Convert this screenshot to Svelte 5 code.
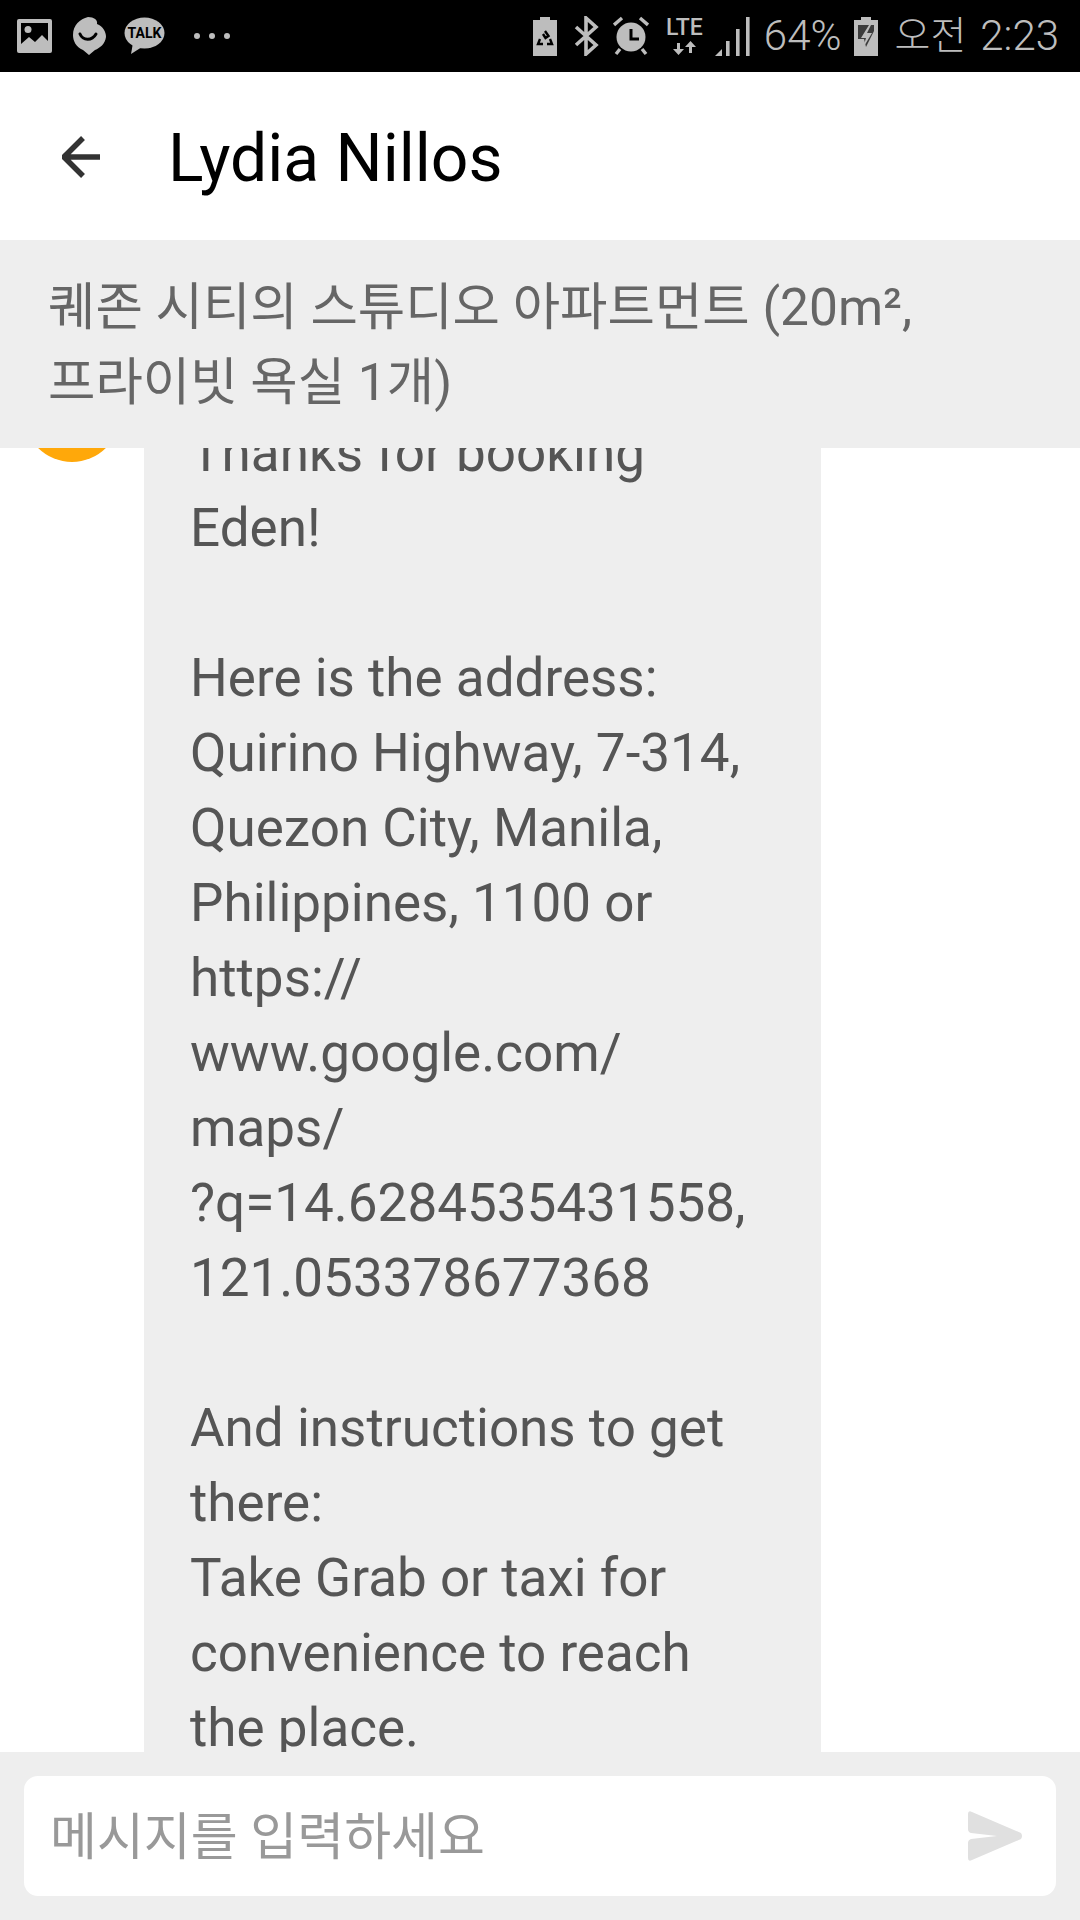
<script lang="ts">
	const messageLines = [
		'Thanks for booking',
		'Eden!',
		'',
		'Here is the address:',
		'Quirino Highway, 7-314,',
		'Quezon City, Manila,',
		'Philippines, 1100 or',
		'https://',
		'www.google.com/',
		'maps/',
		'?q=14.6284535431558,',
		'121.053378677368',
		'',
		'And instructions to get',
		'there:',
		'Take Grab or taxi for',
		'convenience to reach',
		'the place.',
		''
	];
</script>

<div class="screen">
	<div class="statusBar">
		<div class="statusLeft">
			<svg width="35" height="34" viewBox="0 0 35 34">
				<rect width="35" height="34" rx="2" fill="#bdbdbd" />
				<rect x="4" y="4" width="27" height="26" fill="#000" />
				<path d="M4 28 L4 25 L12 18 L18 23 L25 16 L31 22 L31 30 L4 30 Z" fill="#bdbdbd" />
				<circle cx="11" cy="10.5" r="3.5" fill="#bdbdbd" />
			</svg>
			<svg class="heart" width="33" height="38" viewBox="0 0 33 38">
				<path d="M16 38 L10 33 C3 30 0 24 0 18 C0 8 7 2 15 0 C21 0 25 3 24 7 C30 9 33 15 33 20 C32 27 27 31 22 33 Z" fill="#bdbdbd" />
				<path d="M7 17 C10 24 19 24 23 17" fill="none" stroke="#000" stroke-width="3" stroke-linecap="round" />
			</svg>
			<svg class="talk" width="41" height="38" viewBox="0 0 41 38">
				<ellipse cx="20.5" cy="16" rx="20" ry="15.5" fill="#bdbdbd" />
				<path d="M9 26 L7 37 L18 30 Z" fill="#bdbdbd" />
				<text x="20.5" y="21" text-anchor="middle" class="talkText">TALK</text>
			</svg>
			<div class="dots"><span></span><span></span><span></span></div>
		</div>
		<div class="statusRight">
			<svg width="24" height="39" viewBox="0 0 24 39">
				<path d="M7 0 H17 V3 H24 V39 H0 V3 H7 Z" fill="#bdbdbd" />
				<path d="M12 14 L15.5 19 L12.5 21 L10 17 M7 22 L5 27 L10 27 M14 27 L19 27 L17 22" fill="none" stroke="#000" stroke-width="2.4" />
			</svg>
			<svg class="wideGap" width="25" height="40" viewBox="0 0 25 40">
				<path d="M2 11 L22 29 L12 38 L12 2 L22 11 L2 29" fill="none" stroke="#bdbdbd" stroke-width="3.6" />
			</svg>
			<svg width="36" height="40" viewBox="0 0 36 40">
				<circle cx="18" cy="21" r="14.5" fill="#bdbdbd" />
				<path d="M18 13 V23 H26" fill="none" stroke="#000" stroke-width="3" />
				<path d="M1 9 L9 2 M35 9 L27 2 M7 33 L3 38 M29 33 L33 38" stroke="#bdbdbd" stroke-width="3.4" />
			</svg>
			<div class="lte wideGap">
				<span>LTE</span>
				<svg width="23" height="14" viewBox="0 0 23 14">
					<path d="M5.5 14 L0 8 H4 V2 H7 V8 H11 Z M17.5 0 L23 6 H19 V12 H16 V6 H12 Z" fill="#bdbdbd" />
				</svg>
			</div>
			<svg class="tightGap" width="35" height="39" viewBox="0 0 35 39">
				<path d="M0 39 L7 32 V39 Z" fill="#bdbdbd" />
				<rect x="11" y="24" width="3.6" height="15" fill="#bdbdbd" />
				<rect x="21" y="12" width="3.6" height="27" fill="#bdbdbd" />
				<rect x="31" y="0" width="3.6" height="39" fill="#bdbdbd" />
			</svg>
			<span class="statusText">64%</span>
			<svg class="tightGap" width="24" height="39" viewBox="0 0 24 39">
				<path d="M7 0 H17 V3 H24 V39 H0 V3 H7 Z" fill="#bdbdbd" />
				<path d="M4 8 H20 V14 L16 22 L12 30 L10 22 H4 Z" fill="#3c3c3c" />
				<path d="M15 8 L7 21 H12 L9 31 L18 16 H13 L17 8 Z" fill="#bdbdbd" />
			</svg>
			<span class="statusText ampm wideGap">오전</span>
			<span class="statusText">2:23</span>
		</div>
	</div>

	<header class="titleBar">
		<svg class="back" width="38" height="42" viewBox="0 0 38 42">
			<path d="M38 21 H3 M21 2 L2 21 L21 40" fill="none" stroke="#333" stroke-width="5.5" />
		</svg>
		<h1>Lydia Nillos</h1>
	</header>

	<div class="listing">퀘존 시티의 스튜디오 아파트먼트 (20m²,<br />프라이빗 욕실 1개)</div>

	<main class="chat">
		<div class="messageRow">
			<div class="avatar"></div>
			<div class="bubble">
				{#each messageLines as line}
					<div class="line">{line || '\u00a0'}</div>
				{/each}
			</div>
		</div>
	</main>

	<footer class="composer">
		<div class="inputBox">
			<span class="placeholder">메시지를 입력하세요</span>
			<svg width="56" height="50" viewBox="0 0 56 50">
				<path d="M1 3 Q1 -1 5 1 L54 22 Q56 25 54 28 L5 49 Q1 51 1 47 V32 Q1 29 4 28 L30 25 L4 22 Q1 21 1 18 Z" fill="#e0e0e0" />
			</svg>
		</div>
	</footer>
</div>

<style>
	:global(body) {
		margin: 0;
		background: #fff;
	}

	.screen {
		width: 1080px;
		height: 1920px;
		display: flex;
		flex-direction: column;
		overflow: hidden;
		font-family: Roboto, "Noto Sans CJK KR", sans-serif;
	}

	.statusBar {
		height: 72px;
		flex: none;
		background: #000;
		display: flex;
		align-items: center;
		justify-content: space-between;
		padding: 0 21px 0 17px;
		box-sizing: border-box;
	}

	.statusLeft,
	.statusRight {
		display: flex;
		align-items: center;
	}

	.statusLeft {
		gap: 20px;
	}

	.statusRight {
		gap: 14px;
	}

	.heart {
		margin-left: 1px;
	}

	.talk {
		margin-left: -2px;
	}

	.wideGap {
		margin-left: 3px;
	}

	.tightGap {
		margin-left: -2px;
	}

	.talkText {
		font: 700 14px Roboto, sans-serif;
		fill: #000;
	}

	.dots {
		display: flex;
		gap: 9px;
		margin-left: 9px;
	}

	.dots span {
		width: 6px;
		height: 6px;
		border-radius: 50%;
		background: #bdbdbd;
	}

	.lte {
		display: flex;
		flex-direction: column;
		align-items: center;
		width: 37px;
		color: #bdbdbd;
		font-size: 23px;
		font-weight: 500;
		line-height: 20px;
		gap: 3px;
	}

	.statusText {
		color: #bdbdbd;
		font-family: Roboto, "Noto Sans CJK KR", sans-serif;
		font-size: 42px;
		font-weight: 300;
		line-height: 48px;
		white-space: nowrap;
	}

	.ampm {
		font-size: 39px;
	}

	.titleBar {
		height: 168px;
		flex: none;
		background: #fff;
		display: flex;
		align-items: center;
		padding-left: 62px;
		box-sizing: border-box;
	}

	.back {
		margin-right: 68px;
		margin-top: 2px;
	}

	h1 {
		margin: 0;
		padding-top: 5px;
		font-size: 66px;
		font-weight: 400;
		color: #000;
	}

	.listing {
		height: 208px;
		flex: none;
		background: #eee;
		color: #666;
		font-size: 51.5px;
		line-height: 75px;
		padding: 30px 48px 0;
		box-sizing: border-box;
		position: relative;
		z-index: 1;
	}

	.chat {
		flex: 1;
		min-height: 0;
		overflow: hidden;
		background: #fff;
	}

	.messageRow {
		display: flex;
		align-items: flex-start;
		margin-top: -32px;
		padding-left: 24px;
	}

	.avatar {
		width: 96px;
		height: 96px;
		margin-top: -50px;
		border-radius: 50%;
		background: #ffa80a;
		flex: none;
	}

	.bubble {
		width: 677px;
		margin-left: 24px;
		padding: 0 46px;
		box-sizing: border-box;
		background: #eee;
		color: #555;
		font-size: 53px;
		line-height: 75px;
	}

	.line {
		white-space: nowrap;
	}

	.composer {
		height: 168px;
		flex: none;
		background: #eee;
		padding: 24px;
		box-sizing: border-box;
		position: relative;
	}

	.inputBox {
		height: 120px;
		background: #fff;
		border-radius: 14px;
		display: flex;
		align-items: center;
		justify-content: space-between;
		padding: 0 33px 0 26px;
	}

	.placeholder {
		padding-bottom: 6px;
		font-size: 51px;
		color: #999;
	}
</style>
